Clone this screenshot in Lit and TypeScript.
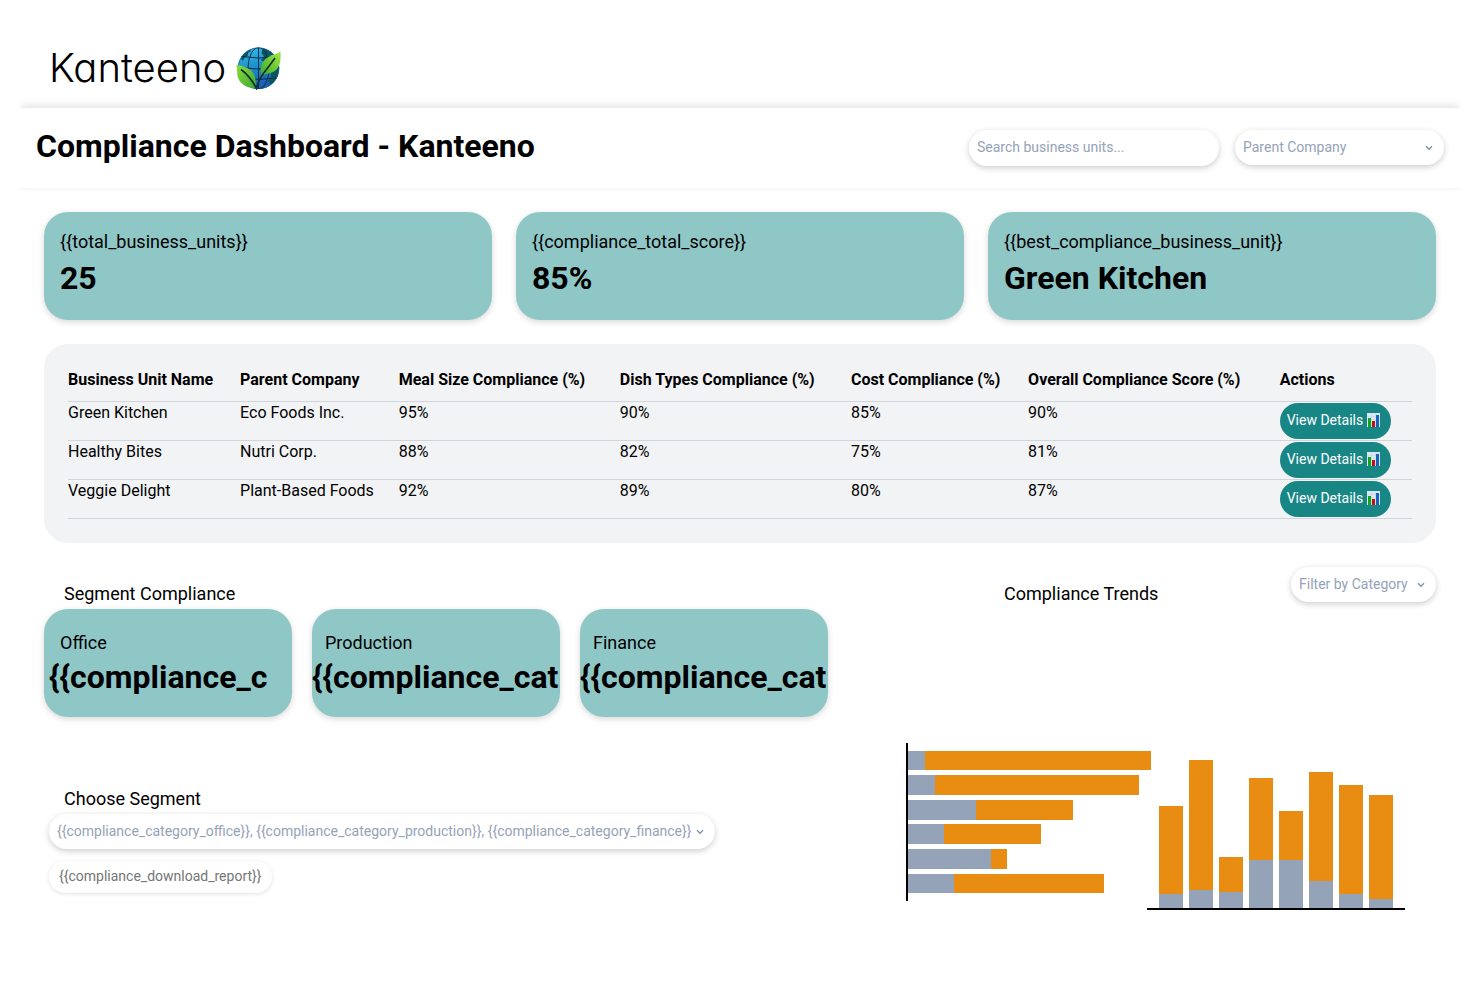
import { LitElement, html, svg, css } from "lit";
import { customElement, property } from "lit/decorators.js";

interface Unit {
  name: string;
  parent: string;
  meal: string;
  dish: string;
  cost: string;
  overall: string;
}

const STATS = [
  { label: "{{total_business_units}}", value: "25" },
  { label: "{{compliance_total_score}}", value: "85%" },
  { label: "{{best_compliance_business_unit}}", value: "Green Kitchen" },
];

const COLUMNS = [
  "Business Unit Name",
  "Parent Company",
  "Meal Size Compliance (%)",
  "Dish Types Compliance (%)",
  "Cost Compliance (%)",
  "Overall Compliance Score (%)",
  "Actions",
];

const UNITS: Unit[] = [
  { name: "Green Kitchen", parent: "Eco Foods Inc.", meal: "95%", dish: "90%", cost: "85%", overall: "90%" },
  { name: "Healthy Bites", parent: "Nutri Corp.", meal: "88%", dish: "82%", cost: "75%", overall: "81%" },
  { name: "Veggie Delight", parent: "Plant-Based Foods", meal: "92%", dish: "89%", cost: "80%", overall: "87%" },
];

const SEGMENTS = [
  { label: "Office", value: "{{compliance_c", inset: true },
  { label: "Production", value: "{{compliance_cat", inset: false },
  { label: "Finance", value: "{{compliance_cat", inset: false },
];

/* Horizontal bars: top, height, end of the grey part, end of the orange part */
const ROWS = [
  [8, 19, 19, 245],
  [32, 20, 29, 233],
  [57, 20, 70, 167],
  [81, 20, 38, 135],
  [106, 20, 85, 101],
  [131, 19, 48, 198],
];

/* Vertical bars: total height and grey height above the baseline */
const BARS = [
  [102, 14],
  [148, 18],
  [51, 16],
  [130, 48],
  [97, 48],
  [136, 27],
  [123, 14],
  [113, 9],
];

@customElement("pill-select")
export class PillSelect extends LitElement {
  static styles = css`
    :host {
      display: grid;
      align-items: center;
    }
    .select,
    .chevron {
      grid-area: 1 / 1;
    }
    .select {
      appearance: none;
      box-sizing: border-box;
      width: 100%;
      height: 35px;
      margin: 0;
      padding: 0 24px 2px 8px;
      border: 0;
      border-radius: 18px;
      background: #fff;
      box-shadow: 0 2px 6px rgba(0, 0, 0, 0.2);
      color: #94a3b8;
      font: 14px/20px Roboto, sans-serif;
    }
    .chevron {
      justify-self: end;
      margin-right: 11px;
      pointer-events: none;
    }
  `;

  @property() label = "";
  @property() text = "";

  render() {
    return html`
      <select class="select" aria-label=${this.label}>
        <option>${this.text}</option>
      </select>
      <svg class="chevron" width="8" height="6" viewBox="0 0 8 6" aria-hidden="true">
        <path d="M1 1.3 L4 4.3 L7 1.3" fill="none" stroke="#7d8fa9" stroke-width="1.3" />
      </svg>
    `;
  }
}

@customElement("app-root")
export class AppRoot extends LitElement {
  static styles = css`
    :host {
      display: block;
      padding: 0 15px 0 20px;
      background: #fff;
      color: #000;
      font: 16px/20px Roboto, sans-serif;
    }
    .page {
      overflow: hidden;
      padding-bottom: 24px;
    }
    .brand {
      display: flex;
      align-items: center;
      gap: 10px;
      height: 108px;
      padding: 28px 0 0 29px;
      box-sizing: border-box;
    }
    .wordmark {
      font: 300 40px/52px Inter, sans-serif;
      font-feature-settings: "cv11";
    }
    .titlebar {
      display: flex;
      align-items: center;
      justify-content: space-between;
      height: 80px;
      padding: 0 16px;
      box-shadow: 0 -2px 8px rgba(0, 0, 0, 0.12);
    }
    .title {
      margin: 0;
      padding-bottom: 4px;
      font-size: 32px;
      line-height: 40px;
      font-weight: 700;
    }
    .tools {
      display: flex;
      align-items: flex-start;
      gap: 16px;
    }
    .search {
      box-sizing: border-box;
      width: 250px;
      height: 36px;
      padding: 0 8px 2px;
      border: 0;
      border-radius: 18px;
      box-shadow: 0 2px 6px rgba(0, 0, 0, 0.2);
      color: #000;
      font: 14px/20px Roboto, sans-serif;
    }
    .search::placeholder {
      color: #94a3b8;
      opacity: 1;
    }
    .company {
      width: 209px;
    }
    .main {
      display: flex;
      flex-direction: column;
      gap: 24px;
      padding: 24px;
    }
    .stats {
      display: grid;
      grid-template-columns: repeat(3, minmax(0, 1fr));
      gap: 24px;
    }
    .card {
      box-sizing: border-box;
      height: 108px;
      padding: 16px;
      border-radius: 24px;
      background: #8fc7c7;
      box-shadow: 0 2px 6px rgba(0, 0, 0, 0.16);
    }
    .card-label {
      font-size: 18px;
      line-height: 28px;
    }
    .card-value {
      font-size: 32px;
      line-height: 44px;
      font-weight: 700;
    }
    .panel {
      padding: 24px;
      border-radius: 24px;
      background: #f2f3f5;
    }
    .table {
      width: 100%;
      border-collapse: separate;
      border-spacing: 0;
    }
    .table th,
    .table td {
      padding: 0;
      border-bottom: 1px solid #d1d5db;
      text-align: left;
      vertical-align: top;
      line-height: 22px;
      white-space: nowrap;
    }
    .table th {
      height: 33px;
      line-height: 24px;
      font-weight: 700;
    }
    .details {
      display: flex;
      align-items: center;
      gap: 4px;
      height: 36px;
      margin: 1px 0;
      padding: 0 11px 2px 7px;
      border: 0;
      border-radius: 18px;
      background: #198686;
      color: #fff;
      font: 14px/20px Roboto, sans-serif;
    }
    .lower {
      display: grid;
      grid-template-columns: minmax(0, 784fr) minmax(0, 530fr);
      gap: 78px;
    }
    .heading {
      margin: 0;
      padding: 0 20px;
      font-size: 18px;
      line-height: 30px;
      font-weight: 400;
    }
    .segment-block {
      padding-top: 12px;
    }
    .segments {
      display: grid;
      grid-template-columns: repeat(3, minmax(0, 1fr));
      gap: 20px;
    }
    .segment {
      padding: 20px 0 0;
      overflow: hidden;
    }
    .segment .card-label {
      padding-left: 13px;
    }
    .segment .card-value {
      line-height: 40px;
    }
    .segment.inset .card-label {
      padding-left: 16px;
    }
    .segment.inset .card-value {
      padding-left: 5px;
    }
    .chooser {
      display: flex;
      flex-direction: column;
      align-items: flex-start;
      padding-top: 67px;
    }
    .chooser pill-select {
      margin: 0 5px 12px;
      width: 666px;
      max-width: 100%;
    }
    .download {
      height: 32px;
      margin: 0 5px;
      padding: 0 10px 2px;
      border: 0;
      border-radius: 16px;
      background: #fff;
      box-shadow: 0 1px 4px rgba(0, 0, 0, 0.12);
      color: #757575;
      font: 14px/20px Roboto, sans-serif;
    }
    .trends-head {
      display: flex;
      align-items: flex-start;
      justify-content: space-between;
      padding-left: 78px;
    }
    .trends-head .heading {
      padding-top: 12px;
    }
    .filter {
      width: 145px;
    }
    .chart {
      display: block;
      max-width: 100%;
      margin-top: 134px;
    }
  `;

  private globe() {
    return html`
      <svg width="46" height="43" viewBox="0 0 46 43" role="img" aria-label="Globe with leaves">
        <defs>
          <linearGradient id="sea" x1="0" y1="0" x2="0.3" y2="1">
            <stop offset="0" stop-color="#3dbdec" />
            <stop offset="0.5" stop-color="#1c93cf" />
            <stop offset="1" stop-color="#1a5cb0" />
          </linearGradient>
          <linearGradient id="leafA" x1="0" y1="0" x2="1" y2="1">
            <stop offset="0" stop-color="#8fdc3a" />
            <stop offset="1" stop-color="#3aa832" />
          </linearGradient>
          <linearGradient id="leafB" x1="1" y1="0" x2="0" y2="1">
            <stop offset="0" stop-color="#a4e83c" />
            <stop offset="1" stop-color="#3aa832" />
          </linearGradient>
          <clipPath id="ball"><circle cx="22.5" cy="21.3" r="20.7" /></clipPath>
        </defs>
        <circle cx="22.5" cy="21.3" r="20.7" fill="url(#sea)" />
        <g clip-path="url(#ball)">
          <path
            d="M5 12 C7 7 10 4 14 2.500 L15 4 L12 6 L12 8.500 L8.500 10.500 L7 14 Z M27 1 L33 3 L38 7 L33 9 L34 12 L28 15 L25 13 L28 9.500 L25.500 6 Z M35 25 L43 18 L42 31 L35 38 L32 34 L35 30 Z"
            fill="#0b5560"
          />
          <g fill="none" stroke="#0c2e45" stroke-width="1">
            <ellipse cx="22.500" cy="21.300" rx="10.500" ry="20.700" />
            <path d="M22.500 0 V43 M5 9.500 Q22.500 12.500 40 9.500 M1.500 20.500 Q22.500 23.500 43.500 20.500 M5 31 Q22.500 34 40 31" />
          </g>
        </g>
        <circle cx="22.500" cy="21.300" r="20.400" fill="none" stroke="#0c5a80" stroke-width="0.700" />
        <path d="M0.300 18 C9 19 17 22.500 19 30 C20 34 20 37.500 19.500 41.500 C9.500 41 3 36 1.600 29.500 C0.600 25 1.500 21.500 0.300 18 Z" fill="url(#leafA)" />
        <path d="M44.500 4.500 C45 11 44.500 18 41 22 C37 26.500 31 26.500 25.500 28.500 C24 22.500 24.500 17 29 12.500 C33 8.500 39 8 44.500 4.500 Z" fill="url(#leafB)" />
        <path d="M5 22.500 Q14 29 20.500 41.500 Q22.500 32.500 28.500 25 Q32.500 20 39 11" fill="none" stroke="#0a2d31" stroke-width="1.600" />
      </svg>
    `;
  }

  private chartIcon() {
    return html`
      <svg width="13" height="14" viewBox="0 0 13 14" aria-hidden="true">
        <rect width="13" height="14" fill="#dbe7f2" />
        <path d="M0 3.500 H13 M0 7 H13 M4.500 0 V14 M8.700 0 V14" stroke="#c0d3e4" stroke-width="0.500" />
        <rect x="1" y="5" width="3" height="9" fill="#12a51c" />
        <rect x="5" y="8" width="3" height="6" fill="#c10f16" />
        <rect x="9" y="2" width="3" height="12" fill="#1565c0" />
      </svg>
    `;
  }

  private trendChart() {
    return html`
      <svg class="chart" width="499" height="167" viewBox="0 0 499 167" role="img" aria-label="Compliance trends" shape-rendering="crispEdges">
        ${ROWS.map(
          ([y, h, grey, end]) => svg`
            <rect x="2" y=${y} width=${grey - 2} height=${h} fill="#94a3b8" />
            <rect x=${grey} y=${y} width=${end - grey} height=${h} fill="#e88c12" />
          `,
        )}
        <rect width="2" height="158" fill="#000" />
        ${BARS.map(
          ([total, grey], i) => svg`
            <rect x=${253 + i * 30} y=${165 - total} width="24" height=${total - grey} fill="#e88c12" />
            <rect x=${253 + i * 30} y=${165 - grey} width="24" height=${grey} fill="#94a3b8" />
          `,
        )}
        <rect x="241" y="165" width="258" height="2" fill="#000" />
      </svg>
    `;
  }

  render() {
    return html`
      <div class="page">
        <header class="brand">
          <span class="wordmark">Kanteeno</span>
          ${this.globe()}
        </header>
        <div class="titlebar">
          <h1 class="title">Compliance Dashboard - Kanteeno</h1>
          <div class="tools">
            <input class="search" type="search" aria-label="Search business units" placeholder="Search business units..." />
            <pill-select class="company" label="Parent company" text="Parent Company"></pill-select>
          </div>
        </div>
        <main class="main">
          <section class="stats">
            ${STATS.map(
              (s) => html`
                <div class="card">
                  <div class="card-label">${s.label}</div>
                  <div class="card-value">${s.value}</div>
                </div>
              `,
            )}
          </section>
          <section class="panel">
            <table class="table">
              <thead>
                <tr>
                  ${COLUMNS.map((c) => html`<th scope="col">${c}</th>`)}
                </tr>
              </thead>
              <tbody>
                ${UNITS.map(
                  (u) => html`
                    <tr>
                      <td>${u.name}</td>
                      <td>${u.parent}</td>
                      <td>${u.meal}</td>
                      <td>${u.dish}</td>
                      <td>${u.cost}</td>
                      <td>${u.overall}</td>
                      <td><button class="details" type="button">View Details ${this.chartIcon()}</button></td>
                    </tr>
                  `,
                )}
              </tbody>
            </table>
          </section>
          <section class="lower">
            <div class="segment-block">
              <h2 class="heading">Segment Compliance</h2>
              <div class="segments">
                ${SEGMENTS.map(
                  (s) => html`
                    <div class="card segment ${s.inset ? "inset" : ""}">
                      <div class="card-label">${s.label}</div>
                      <div class="card-value">${s.value}</div>
                    </div>
                  `,
                )}
              </div>
              <div class="chooser">
                <h2 class="heading">Choose Segment</h2>
                <pill-select
                  label="Choose segment"
                  text="{{compliance_category_office}}, {{compliance_category_production}}, {{compliance_category_finance}}"
                ></pill-select>
                <button class="download" type="button">{{compliance_download_report}}</button>
              </div>
            </div>
            <div class="trends">
              <div class="trends-head">
                <h2 class="heading">Compliance Trends</h2>
                <pill-select class="filter" label="Filter by category" text="Filter by Category"></pill-select>
              </div>
              ${this.trendChart()}
            </div>
          </section>
        </main>
      </div>
    `;
  }
}
